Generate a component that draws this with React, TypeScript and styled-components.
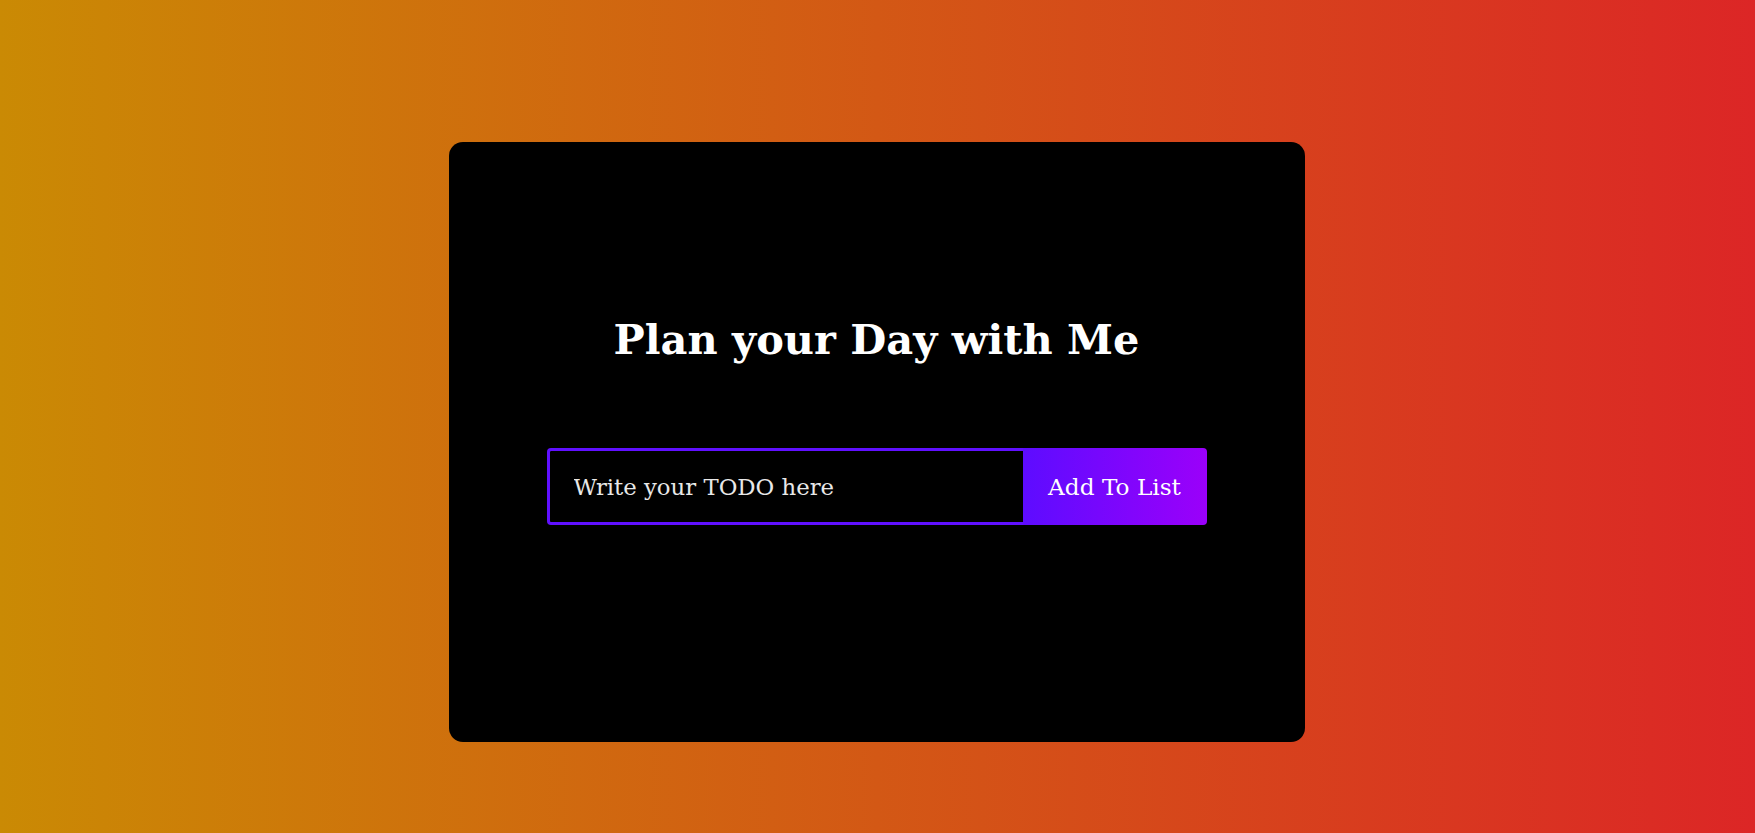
import React from "react";
import styled, { createGlobalStyle } from "styled-components";

const Global = createGlobalStyle`
  * { box-sizing: border-box; }
  html, body { margin: 0; padding: 0; }
  body {
    font-family: Georgia, "DejaVu Serif", serif;
    background: linear-gradient(90deg, #ca8a04 0%, #dc2626 100%);
    min-height: 100vh;
  }
`;

const Page = styled.div`
  width: 100%;
  height: 833px;
  display: flex;
  justify-content: center;
  padding-top: 142px;
`;

const Card = styled.div`
  width: 856px;
  height: 600px;
  margin-right: 2px;
  background: #000;
  border-radius: 14px;
  display: flex;
  flex-direction: column;
  align-items: center;
  padding-top: 170px;
`;

const Title = styled.h1`
  margin: 0;
  color: #fff;
  font-family: Georgia, "DejaVu Serif", serif;
  font-weight: 700;
  font-size: 41.5px;
  line-height: 56px;
`;

const Form = styled.form`
  display: flex;
  margin-top: 80px;
  height: 77px;
`;

const Input = styled.input`
  width: 476px;
  height: 100%;
  padding: 0 24px;
  border: 3px solid #6010ff;
  border-right: none;
  border-radius: 4px 0 0 4px;
  background: transparent;
  color: #fff;
  outline: none;
  font-family: Georgia, "DejaVu Serif", serif;
  font-size: 22.8px;
  &::placeholder { color: #e8e8e8; }
`;

const Button = styled.button`
  width: 184px;
  height: 100%;
  border: none;
  border-radius: 0 4px 4px 0;
  background: linear-gradient(90deg, #5d0cff 0%, #9b00fa 100%);
  color: #fff;
  font-family: Georgia, "DejaVu Serif", serif;
  font-size: 23.2px;
  padding: 0;
  cursor: pointer;
`;

export default function App() {
  return (
    <>
      <Global />
      <Page>
        <Card>
          <Title>Plan your Day with Me</Title>
          <Form onSubmit={(e) => e.preventDefault()}>
            <Input placeholder="Write your TODO here" />
            <Button type="submit">Add To List</Button>
          </Form>
        </Card>
      </Page>
    </>
  );
}
